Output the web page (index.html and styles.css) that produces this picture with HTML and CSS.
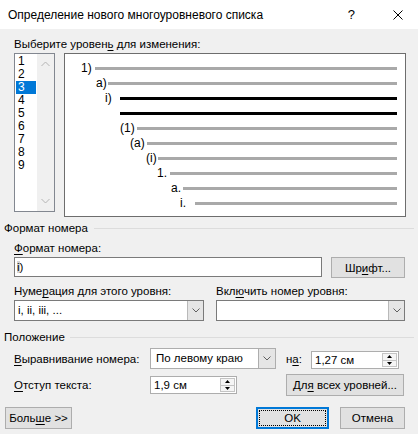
FILE: index.html
```html
<!DOCTYPE html>
<html lang="ru">
<head>
    <meta charset="UTF-8">
    <title>Определение нового многоуровневого списка</title>
    <link rel="stylesheet" href="styles.css">
</head>
<body>
    <div class="dialog">
        <!-- Title bar -->
        <div class="titlebar">
            <span class="title">Определение нового многоуровневого списка</span>
            <span class="help">?</span>
            <svg class="close" width="10" height="10" viewBox="0 0 10 10">
                <path d="M0.5 0.5 L9.5 9.5 M9.5 0.5 L0.5 9.5" stroke="#000" stroke-width="1" fill="none"/>
            </svg>
        </div>

        <!-- Level picker and preview -->
        <div class="caption">Выберите уровен<u>ь</u> для изменения:</div>
        <div class="levels">
            <div class="listbox">
                <ul class="items">
                    <li>1</li>
                    <li>2</li>
                    <li class="selected">3</li>
                    <li>4</li>
                    <li>5</li>
                    <li>6</li>
                    <li>7</li>
                    <li>8</li>
                    <li>9</li>
                </ul>
                <div class="vscroll">
                    <svg width="9" height="6" viewBox="0 0 9 6"><path d="M0.5 5 L4.5 1 L8.5 5" stroke="#b4b4b4" fill="none"/></svg>
                    <svg width="9" height="6" viewBox="0 0 9 6"><path d="M0.5 1 L4.5 5 L8.5 1" stroke="#b4b4b4" fill="none"/></svg>
                </div>
            </div>

            <div class="preview">
                <div class="row r1"><span class="num">1)</span><span class="line"></span></div>
                <div class="row r2"><span class="num">a)</span><span class="line"></span></div>
                <div class="row r3"><span class="num">i)</span><span class="line bold"></span></div>
                <div class="row r4"><span class="num"></span><span class="line bold"></span></div>
                <div class="row r5"><span class="num">(1)</span><span class="line"></span></div>
                <div class="row r6"><span class="num">(a)</span><span class="line"></span></div>
                <div class="row r7"><span class="num">(i)</span><span class="line"></span></div>
                <div class="row r8"><span class="num">1.</span><span class="line"></span></div>
                <div class="row r9"><span class="num">a.</span><span class="line"></span></div>
                <div class="row r10"><span class="num">i.</span><span class="line"></span></div>
            </div>
        </div>

        <!-- Number format -->
        <div class="group-title">Формат номера</div>
        <div class="field-label"><u>Ф</u>ормат номера:</div>
        <div class="format-row">
            <div class="textbox"><span class="field-code">i</span>)</div>
            <button class="btn font-btn">Шр<u>и</u>фт...</button>
        </div>
        <div class="pair-labels">
            <span>Нуме<u>р</u>ация для этого уровня:</span>
            <span>Вкл<u>ю</u>чить номер уровня:</span>
        </div>
        <div class="pair-combos">
            <div class="combo"><span class="value">i, ii, iii, ...</span><span class="drop"><svg width="8" height="5" viewBox="0 0 8 5"><path d="M0.5 0.5 L4 4 L7.5 0.5" stroke="#606060" fill="none"/></svg></span></div>
            <div class="combo"><span class="value"></span><span class="drop"><svg width="8" height="5" viewBox="0 0 8 5"><path d="M0.5 0.5 L4 4 L7.5 0.5" stroke="#606060" fill="none"/></svg></span></div>
        </div>

        <!-- Position -->
        <div class="group-title second">Положение</div>
        <div class="position">
            <span class="pos-label"><u>В</u>ыравнивание номера:</span>
            <div class="combo align-combo"><span class="value">По левому краю</span><span class="drop"><svg width="8" height="5" viewBox="0 0 8 5"><path d="M0.5 0.5 L4 4 L7.5 0.5" stroke="#606060" fill="none"/></svg></span></div>
            <span class="pos-label at">н<u>а</u>:</span>
            <div class="spin at-spin">
                <span class="value">1,27 см</span>
                <span class="arrows">
                    <span class="arrow"><svg width="5" height="3" viewBox="0 0 5 3"><path d="M0 3 L2.5 0 L5 3 Z" fill="#000"/></svg></span>
                    <span class="arrow"><svg width="5" height="3" viewBox="0 0 5 3"><path d="M0 0 L2.5 3 L5 0 Z" fill="#000"/></svg></span>
                </span>
            </div>

            <span class="pos-label"><u>О</u>тступ текста:</span>
            <div class="spin indent-spin">
                <span class="value">1,9 см</span>
                <span class="arrows">
                    <span class="arrow"><svg width="5" height="3" viewBox="0 0 5 3"><path d="M0 3 L2.5 0 L5 3 Z" fill="#000"/></svg></span>
                    <span class="arrow"><svg width="5" height="3" viewBox="0 0 5 3"><path d="M0 0 L2.5 3 L5 0 Z" fill="#000"/></svg></span>
                </span>
            </div>
            <button class="btn all-levels">Дл<u>я</u> всех уровней...</button>
        </div>

        <!-- Dialog buttons -->
        <div class="footer">
            <button class="btn more">Боль<u>ш</u>е &gt;&gt;</button>
            <button class="btn ok"><span class="focus">OK</span></button>
            <button class="btn cancel">Отмена</button>
        </div>
    </div>
</body>
</html>
```

FILE: styles.css
```css
body {
    margin: 0;
    background: #f0f0f0;
    font-family: 'Liberation Sans', Arial, sans-serif;
    font-size: 11.5px;
    color: #000;
}

.dialog {
    width: 418px;
    height: 434px;
    overflow: hidden;
}

u {
    text-decoration-thickness: 1px;
    text-underline-offset: 2px;
}

/* title bar */
.titlebar {
    height: 29px;
    background: #fff;
    display: flex;
    align-items: center;
    padding-left: 8px;
}

.title {
    flex: 1;
    font-size: 12px;
}

.help {
    font-size: 13px;
    margin-right: 38px;
}

.close {
    margin-right: 15px;
}

/* level picker */
.caption {
    margin: 7px 0 0 14px;
    line-height: 16px;
    height: 16px;
}

.levels {
    display: flex;
    align-items: flex-start;
    margin: 1px 0 0 14px;
}

.listbox {
    width: 39px;
    height: 157px;
    border: 1px solid #828790;
    background: #fff;
    display: flex;
    font-size: 12px;
}

.items {
    list-style: none;
    margin: 0;
    padding: 1px 0 0 1px;
    width: 21px;
}

.items li {
    width: 18px;
    padding-left: 2px;
    height: 13px;
    line-height: 13px;
}

.items li.selected {
    background: #0078d7;
    color: #fff;
}

.vscroll {
    flex: 1;
    background: #f0f0f0;
    display: flex;
    flex-direction: column;
    justify-content: space-between;
    align-items: center;
    padding: 7px 0 7px;
}

.preview {
    margin-left: 9px;
    width: 340px;
    border: 1px solid #6d6d6d;
    background: #fff;
    padding-top: 7px;
    height: 155px;
    font-size: 12px;
}

.row {
    display: grid;
    height: 15px;
    align-items: center;
    padding-right: 8px;
}

.num {
    line-height: 15px;
    white-space: nowrap;
}

.line {
    height: 3px;
    background: #a9a9a9;
}

.line.bold {
    background: #000;
}

.r1 { grid-template-columns: 16px 14px 1fr; }
.r2 { grid-template-columns: 31px 12px 1fr; }
.r3 { grid-template-columns: 40px 15px 1fr; }
.r4 { grid-template-columns: 55px 0 1fr; }
.r5 { grid-template-columns: 55px 17px 1fr; }
.r6 { grid-template-columns: 65px 17px 1fr; }
.r7 { grid-template-columns: 81px 12px 1fr; }
.r8 { grid-template-columns: 92px 13px 1fr; }
.r9 { grid-template-columns: 106px 12px 1fr; }
.r10 { grid-template-columns: 115px 15px 1fr; }

.row .num { grid-column: 2; }
.row .line { grid-column: 3; }

/* group captions with the etched rule */
.group-title {
    display: flex;
    align-items: center;
    gap: 6px;
    margin-top: 3px;
    padding: 0 4px;
    height: 16px;
    line-height: 16px;
}

.group-title::after {
    content: '';
    flex: 1;
    height: 1px;
    background: #dcdcdc;
}

.group-title.second {
    margin-top: 8px;
    gap: 5px;
}

.field-label {
    margin: 4px 0 0 14px;
    height: 16px;
    line-height: 16px;
}

.format-row {
    display: flex;
    align-items: flex-start;
    margin: 1px 0 0 14px;
    gap: 9px;
}

.textbox {
    width: 304px;
    height: 18px;
    line-height: 18px;
    border: 1px solid #7a7a7a;
    background: #fff;
    padding-left: 2px;
}

.field-code {
    background: #d4d4d4;
}

.btn {
    font-family: inherit;
    font-size: inherit;
    color: #000;
    background: #e1e1e1;
    border: 1px solid #adadad;
    padding: 0;
    height: 22px;
}

.font-btn {
    width: 74px;
    height: 21px;
}

.pair-labels {
    display: grid;
    grid-template-columns: 202px 1fr;
    margin: 5px 0 0 14px;
    height: 16px;
    line-height: 16px;
}

.pair-combos {
    display: grid;
    grid-template-columns: 190px 189px;
    gap: 12px;
    margin: 1px 0 0 14px;
}

/* combo boxes */
.combo {
    display: flex;
    height: 21px;
    box-sizing: border-box;
    border: 1px solid #7a7a7a;
    background: #fff;
}

.combo .value {
    flex: 1;
    line-height: 19px;
    padding-left: 3px;
    white-space: nowrap;
}

.combo .drop {
    width: 15px;
    background: #e5e5e5;
    border-left: 1px solid #b9b9b9;
    display: flex;
    align-items: center;
    justify-content: center;
}

/* position grid */
.position {
    display: grid;
    grid-template-columns: 136px 126px 10px 25px 93px;
    grid-template-rows: 21px 22px;
    row-gap: 5px;
    margin: 3px 0 0 14px;
    align-items: center;
}

.pos-label {
    line-height: 16px;
}

.align-combo {
    grid-column: 2;
    border-color: #adadad;
}

.align-combo .value {
    padding-left: 5px;
}

.align-combo .drop {
    width: 16px;
    background: #e5e5e5;
    border-left: 1px solid #adadad;
}

.at {
    grid-column: 4;
}

.spin {
    display: flex;
    height: 18px;
    box-sizing: border-box;
    border: 1px solid #adadad;
    background: #fff;
}

.spin .value {
    flex: 1;
    line-height: 16px;
    padding-left: 3px;
}

.arrows {
    width: 15px;
    display: flex;
    flex-direction: column;
    padding: 1px 1px 1px 0;
}

.arrow {
    flex: 1;
    border: 1px solid #c4c4c4;
    background: #f5f5f5;
    display: flex;
    align-items: center;
    justify-content: center;
}

.arrow + .arrow {
    border-top: none;
}

.at-spin {
    grid-column: 5;
    width: 88px;
    margin-top: 3px;
}

.indent-spin {
    grid-column: 2;
    width: 87px;
}

.all-levels {
    grid-column: 4 / span 2;
    width: 118px;
    height: 22px;
}

/* bottom buttons */
.footer {
    display: flex;
    margin: 11px 0 0 5px;
}

.more {
    width: 67px;
}

.ok {
    margin-left: 184px;
    width: 73px;
    border: 2px solid #0078d7;
    padding: 1px;
}

.ok .focus {
    display: block;
    height: 14px;
    line-height: 14px;
    border: 1px dotted #000;
}

.cancel {
    margin-left: 11px;
    width: 65px;
}
```
